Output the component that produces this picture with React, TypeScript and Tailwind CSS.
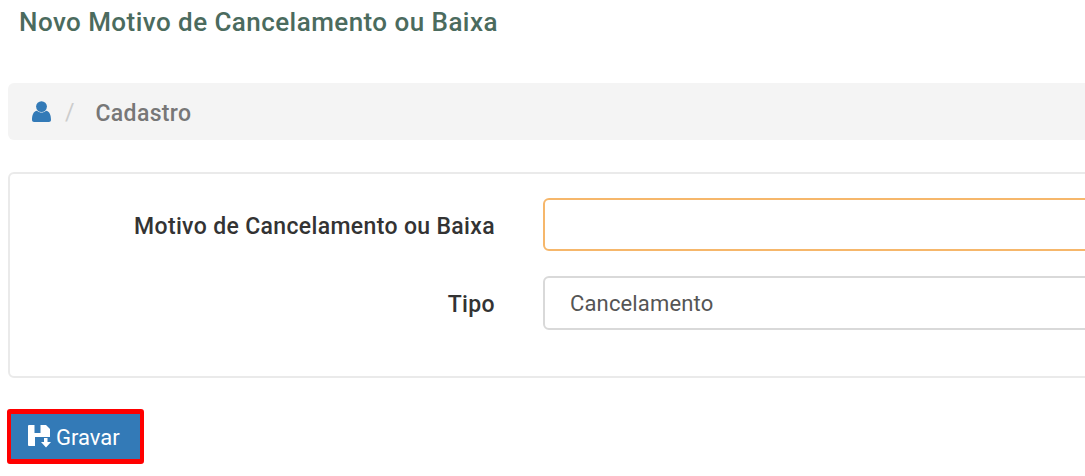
function UserIcon() {
  return (
    <svg width="19" height="21" viewBox="0 0 19 21" fill="#337ab7" aria-hidden="true">
      <circle cx="9.5" cy="5.6" r="5.4" />
      <path d="M0 19c0-5 1.5-8.6 5-9.2 1.2 1.2 2.8 1.8 4.5 1.8s3.3-.6 4.5-1.8c3.5.6 5 4.2 5 9.2 0 1.2-.9 2-2 2H2c-1.100 0-2-.8-2-2z" />
    </svg>
  );
}

function SaveDownIcon() {
  return (
    <svg width="24" height="23" viewBox="0 0 24 23" fill="#ffffff" aria-hidden="true">
      <path d="M1 0h5.500v8h6V0H18l4 4v8H7v9H1a1 1 0 0 1-1-1V1a1 1 0 0 1 1-1z" />
      <path d="M16 13h3.500v4H23l-5 5.500-5-5.500h3z" />
    </svg>
  );
}

export default function App() {
  return (
    <div className="h-[476px] w-[1085px] overflow-hidden bg-white font-['Roboto',sans-serif]">
      <div className="w-[1200px] pl-2">
        <h1 className="pl-[11px] pt-[7px] pb-[1px] text-[26px] leading-[30px] font-medium tracking-[0.45px] text-[#4b6b5e]">
          Novo Motivo de Cancelamento ou Baixa
        </h1>

        <div className="mt-[45px] flex h-[57px] items-center rounded-[6px] bg-[#f4f4f4] pl-[24px] text-[23px]">
          <UserIcon />
          <span className="ml-[14px] pt-[3px] text-[#cccccc]">/</span>
          <span className="ml-[21px] pt-[5px] font-medium tracking-[0.35px] text-[#777777]">Cadastro</span>
        </div>

        <div className="mt-[32px] flex h-[206px] flex-col gap-[25px] rounded-[6px] border-2 border-[#eaeaea] pt-[24px]">
          <div className="flex items-center">
            <label className="w-[485px] pt-[6px] text-right text-[23px] font-medium tracking-[0.35px] text-[#333333]">
              Motivo de Cancelamento ou Baixa
            </label>
            <input
              type="text"
              className="ml-[48px] h-[53px] flex-1 rounded-[6px] border-2 border-[#f6b76b] bg-white outline-none"
            />
          </div>
          <div className="flex items-center">
            <label className="w-[485px] pt-[4px] text-right text-[23px] font-medium tracking-[0.35px] text-[#333333]">Tipo</label>
            <div className="ml-[48px] flex h-[54px] flex-1 items-center rounded-[6px] border-2 border-[#d9d9d9] bg-white pl-[25px] text-[22px] tracking-[0.15px] text-[#555555]">
              Cancelamento
            </div>
          </div>
        </div>

        <button
          type="button"
          className="-ml-px mt-[31px] flex h-[55px] w-[137px] items-center gap-[4px] rounded-[3px] border-x-4 border-y-[5px] border-[#ff0000] bg-[#337ab7] pl-[17px] text-[22px] text-white"
        >
          <SaveDownIcon />
          <span className="pt-[2px]">Gravar</span>
        </button>
      </div>
    </div>
  );
}
